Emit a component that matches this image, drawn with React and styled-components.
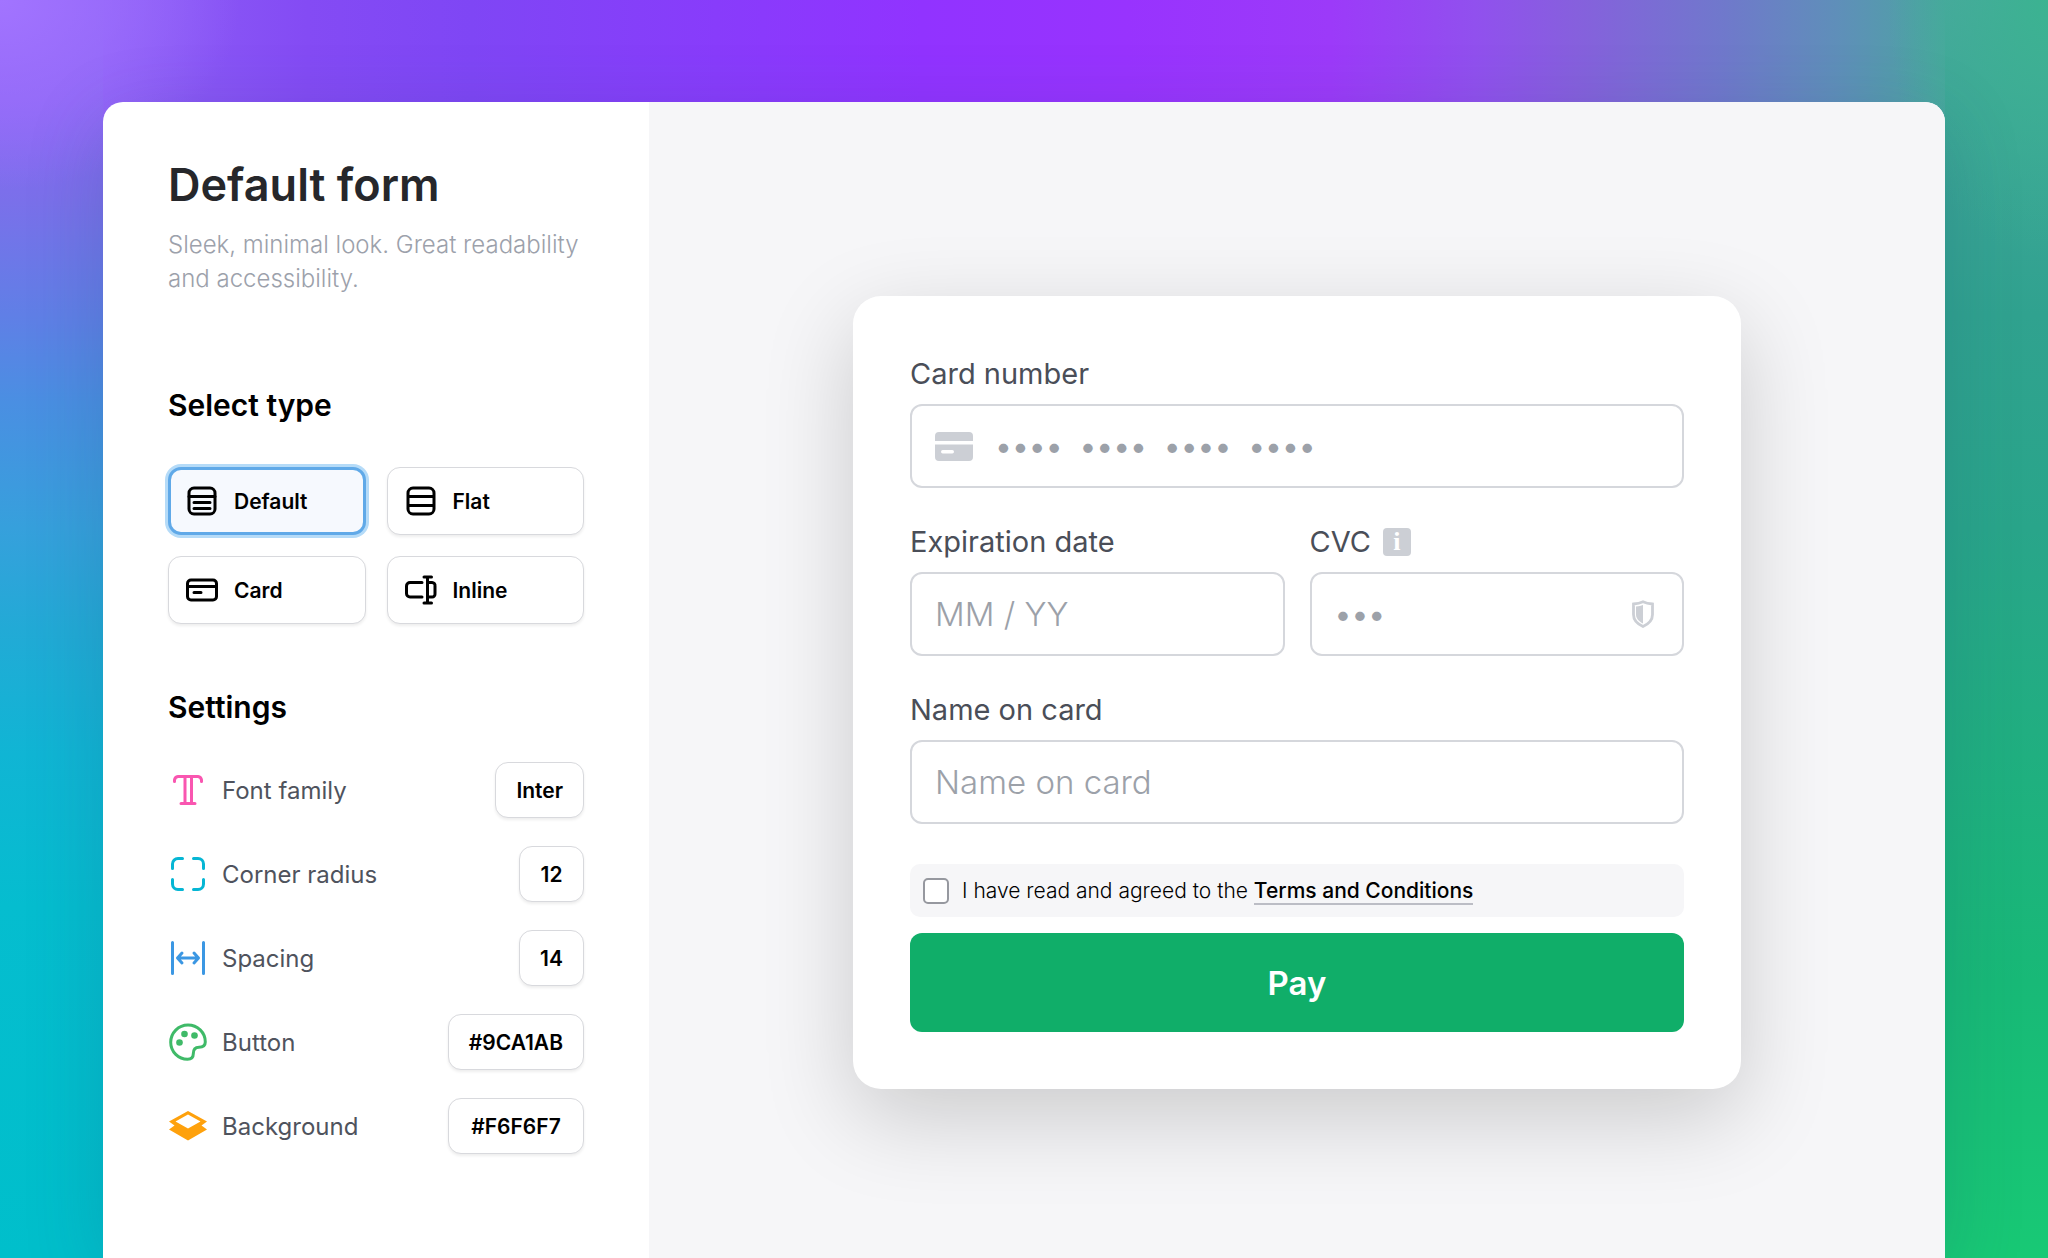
import React, { useState } from 'react';
import styled, { createGlobalStyle } from 'styled-components';

const GlobalStyle = createGlobalStyle`
  *, *::before, *::after {
    box-sizing: border-box;
  }
  body {
    margin: 0;
    font-family: Inter, "Liberation Sans", sans-serif;
    color: #000;
  }
  button, input {
    font: inherit;
    color: inherit;
  }
`;

// Form type icons
const DefaultIcon = () => (
  <svg width="36" height="36" viewBox="0 0 36 36" fill="none" stroke="#000" strokeWidth="3" strokeLinecap="round" aria-hidden="true">
    <rect x="5" y="5" width="26" height="26" rx="5" />
    <path d="M5 13.500h26M10 19.500h16M10 25.500h16" />
  </svg>
);
const FlatIcon = () => (
  <svg width="36" height="36" viewBox="0 0 36 36" fill="none" stroke="#000" strokeWidth="3" aria-hidden="true">
    <rect x="5" y="5" width="26" height="26" rx="5" />
    <path d="M5 13.500h26M5 22.500h26" />
  </svg>
);
const CardIcon = () => (
  <svg width="36" height="36" viewBox="0 0 36 36" fill="none" stroke="#000" strokeWidth="3" strokeLinecap="round" aria-hidden="true">
    <rect x="3.500" y="8" width="29" height="20" rx="3.500" />
    <path d="M3.500 14.500h29M10 20.500h7" />
  </svg>
);
const InlineIcon = () => (
  <svg width="36" height="36" viewBox="0 0 36 36" fill="none" stroke="#000" strokeWidth="3" strokeLinecap="round" strokeLinejoin="round" aria-hidden="true">
    <path d="M19 10.500H7a3.500 3.500 0 0 0-3.500 3.500v7.500A3.500 3.500 0 0 0 7 25h12" />
    <path d="M25 10.500h4a3 3 0 0 1 3 3.500v7.500A3 3 0 0 1 29 25h-4" />
    <path d="M24.500 5v26M21 5h7.500M21 31h7.500" />
  </svg>
);

// Settings icons
const FontIcon = () => (
  <svg width="40" height="40" viewBox="0 0 40 40" fill="none" stroke="#f956b0" strokeWidth="3" strokeLinecap="round" strokeLinejoin="round" aria-hidden="true">
    <path d="M6.500 11.500V10A4 4 0 0 1 10 6.500h20A4 4 0 0 1 33.500 10v1.500" />
    <path d="M17 6.500v27M23.500 6.500v27M13 33.500h14" />
  </svg>
);
const RadiusIcon = () => (
  <svg width="40" height="40" viewBox="0 0 40 40" fill="none" stroke="#06b6d4" strokeWidth="3" strokeLinecap="round" aria-hidden="true">
    <path d="M4.500 14.500V10A5.500 5.500 0 0 1 10 4.500h4.500M25.500 4.500H30a5.500 5.500 0 0 1 5.500 5.500v4.500M35.500 25.500V30a5.500 5.500 0 0 1-5.500 5.500h-4.500M14.500 35.500H10A5.500 5.500 0 0 1 4.500 30v-4.500" />
  </svg>
);
const SpacingIcon = () => (
  <svg width="40" height="40" viewBox="0 0 40 40" fill="none" stroke="#3b97e3" strokeWidth="3" strokeLinecap="round" strokeLinejoin="round" aria-hidden="true">
    <path d="M4.500 4.500v31M35.500 4.500v31M10 20h20M14 15l-4.500 5 4.500 5M26 15l4.500 5-4.500 5" />
  </svg>
);
const PaletteIcon = () => (
  <svg width="40" height="40" viewBox="0 0 40 40" fill="none" aria-hidden="true">
    <path d="M20 3a17.300 17.300 0 0 0-17.300 17.300C2.700 30 10.500 37.300 19.500 37.300c4.500 0 5.800-2.800 5.800-5.500 0-4.500 1.500-6.600 5.700-6.600 4 0 6.300-2 6.300-5.200C37.300 10.500 29.500 3 20 3z" stroke="#3fba68" strokeWidth="3" />
    <circle cx="11.500" cy="20.500" r="3.300" fill="#3fba68" />
    <circle cx="16.500" cy="12" r="3.300" fill="#3fba68" />
    <circle cx="26.500" cy="13.500" r="3.300" fill="#3fba68" />
  </svg>
);
const LayersIcon = () => (
  <svg width="40" height="40" viewBox="0 0 40 40" fill="#fea10c" aria-hidden="true">
    <path fillRule="evenodd" d="M20 5 39 15.500 33.500 19.500 39 23.500 20 34.500 1 23.500 6.500 19.500 1 15.500zM20 8.500 7.500 15.500 20 22.500l12.500-7z" />
  </svg>
);

// Payment form icons
const CreditCardIcon = () => (
  <svg width="38" height="30" viewBox="0 0 38 30" fill="#cccfd5" aria-hidden="true">
    <path d="M4 1h30a4 4 0 0 1 4 4v5H0V5a4 4 0 0 1 4-4zM0 13.500h38V26a4 4 0 0 1-4 4H4a4 4 0 0 1-4-4z" />
    <rect x="6" y="19" width="13" height="3.500" rx="1.700" fill="#fff" />
  </svg>
);
const ShieldIcon = () => (
  <svg width="24" height="28" viewBox="0 0 24 28" aria-hidden="true">
    <path d="M12 1.800C9.500 3 6 3.800 2.500 4v10.500c0 5.500 4 9.500 9.500 12 5.500-2.500 9.500-6.500 9.500-12V4C18 3.800 14.500 3 12 1.800z" fill="none" stroke="#cccfd5" strokeWidth="2.800" />
    <path d="M12 5c-2 .8-4 1.300-7 1.500v8c0 4 3 7 7 9z" fill="#cccfd5" />
  </svg>
);

const types = [
  { id: 'default', name: 'Default', Icon: DefaultIcon },
  { id: 'flat', name: 'Flat', Icon: FlatIcon },
  { id: 'card', name: 'Card', Icon: CardIcon },
  { id: 'inline', name: 'Inline', Icon: InlineIcon },
];

const settings = [
  { id: 'font', name: 'Font family', value: 'Inter', Icon: FontIcon },
  { id: 'radius', name: 'Corner radius', value: '12', Icon: RadiusIcon },
  { id: 'spacing', name: 'Spacing', value: '14', Icon: SpacingIcon },
  { id: 'button', name: 'Button', value: '#9CA1AB', Icon: PaletteIcon, wide: true },
  { id: 'background', name: 'Background', value: '#F6F6F7', Icon: LayersIcon, wide: true },
];

function Sidebar() {
  const [type, setType] = useState('default');
  return (
    <StyledSidebar>
      <Title>Default form</Title>
      <Description>Sleek, minimal look. Great readability and accessibility.</Description>
      <SectionTitle>Select type</SectionTitle>
      <TypeGrid>
        {types.map(({ id, name, Icon }) => (
          <TypeButton
            key={id}
            type="button"
            $active={type === id}
            aria-pressed={type === id}
            onClick={() => setType(id)}
          >
            <Icon />
            {name}
          </TypeButton>
        ))}
      </TypeGrid>
      <SectionTitle>Settings</SectionTitle>
      <SettingList>
        {settings.map(({ id, name, value, Icon, wide }) => (
          <SettingRow key={id}>
            <Icon />
            <SettingName id={`setting-${id}`}>{name}</SettingName>
            <SettingValue type="button" $wide={wide} aria-describedby={`setting-${id}`}>
              {value}
            </SettingValue>
          </SettingRow>
        ))}
      </SettingList>
    </StyledSidebar>
  );
}

function PaymentForm() {
  return (
    <StyledForm onSubmit={(e) => e.preventDefault()}>
      <Field>
        <Label htmlFor="number">Card number</Label>
        <InputBox>
          <CreditCardIcon />
          <Input id="number" $dots placeholder="••••  ••••  ••••  ••••" />
        </InputBox>
      </Field>
      <FieldRow>
        <Field>
          <Label htmlFor="expiry">Expiration date</Label>
          <InputBox>
            <Input id="expiry" placeholder="MM / YY" />
          </InputBox>
        </Field>
        <Field>
          <LabelLine>
            <Label htmlFor="cvc">CVC</Label>
            <InfoButton type="button" aria-label="About CVC">i</InfoButton>
          </LabelLine>
          <InputBox>
            <Input id="cvc" $dots placeholder="•••" />
            <ShieldIcon />
          </InputBox>
        </Field>
      </FieldRow>
      <Field>
        <Label htmlFor="name">Name on card</Label>
        <InputBox>
          <Input id="name" placeholder="Name on card" />
        </InputBox>
      </Field>
      <Terms>
        <Checkbox type="checkbox" id="terms" />
        <label htmlFor="terms">
          I have read and agreed to the <TermsLink href="#terms">Terms and Conditions</TermsLink>
        </label>
      </Terms>
      <PayButton type="submit">Pay</PayButton>
    </StyledForm>
  );
}

function App() {
  return (
    <Page>
      <GlobalStyle />
      <Window>
        <Sidebar />
        <Preview>
          <PaymentForm />
        </Preview>
      </Window>
    </Page>
  );
}

const Page = styled.div`
  min-height: 100vh;
  display: flex;
  padding: 102px 103px 0;
  overflow: hidden;
  background:
    radial-gradient(ellipse 240px 190px at 0 0, #a274ff, rgba(162, 116, 255, 0)) no-repeat,
    radial-gradient(ellipse 160px 260px at 100% 0, #3bb391, rgba(59, 179, 145, 0)) no-repeat,
    linear-gradient(180deg, #8d60f6 0%, #8b66f4 8%, #7a70ea 16%, #607fe6 25%, #4a8fe2 32%, #36a0dc 42%, #22aad6 50%, #10b5d4 60%, #05bdcf 72%, #00bfcb 100%) left / 103px 100% no-repeat,
    linear-gradient(180deg, #4ba5a0 0%, #3ea598 9%, #30a28f 25%, #29a58a 42%, #20af80 60%, #18b977 78%, #18c975 100%) right / 103px 100% no-repeat,
    linear-gradient(90deg, #8d60f6 5%, #844bf4 15%, #7f46f5 23%, #883cfb 35%, #9133ff 45%, #9833fe 55%, #9c3af9 65%, #9150ee 72%, #8660dd 77%, #7078cc 84%, #5e90b8 90%, #4ba5a0 95%);
`;
const Window = styled.main`
  flex: 1;
  display: grid;
  grid-template-columns: 546px 1fr;
  border-radius: 20px 20px 0 0;
  overflow: hidden;
  background: #fff;
  box-shadow: 0 20px 80px rgba(30, 70, 110, .2);
`;
const StyledSidebar = styled.aside`
  padding: 53px 65px 64px;
`;
const Title = styled.h1`
  margin: 0;
  font-size: 45px;
  font-weight: 600;
  line-height: 60px;
  color: #26272b;
`;
const Description = styled.p`
  margin: 13px 0 26px;
  font-size: 24px;
  font-weight: 350;
  line-height: 34px;
  color: #9ca1ab;
`;
const SectionTitle = styled.h2`
  margin: 0;
  padding-top: 63px;
  font-size: 30px;
  font-weight: 600;
  line-height: 40px;
`;
const TypeGrid = styled.div`
  display: grid;
  grid-template-columns: 1fr 1fr;
  gap: 21px;
  margin-top: 42px;
`;
const TypeButton = styled.button`
  height: 68px;
  display: flex;
  align-items: center;
  gap: 14px;
  padding: 0 15px;
  border: 1px solid #d8d9dd;
  border-radius: 13px;
  background: #fff;
  box-shadow: 0 2px 3px rgba(0, 0, 0, .07);
  font-size: 21px;
  font-weight: 600;
  cursor: pointer;
  ${({ $active }) => $active && `
    padding: 0 13px;
    border: 3px solid #60a9e8;
    background: #f6f9fe;
    box-shadow: 0 0 0 3px #b5dbf8;
  `}
`;
const SettingList = styled.ul`
  margin: 35px 0 0;
  padding: 0;
  display: flex;
  flex-direction: column;
  gap: 28px;
  list-style: none;
`;
const SettingRow = styled.li`
  display: flex;
  align-items: center;
`;
const SettingName = styled.span`
  flex: 1;
  margin-left: 14px;
  font-size: 24px;
  color: #4f535d;
`;
const SettingValue = styled.button`
  height: 56px;
  min-width: ${({ $wide }) => ($wide ? '136px' : '65px')};
  padding: 0 20px;
  border: 1px solid #d8d9dd;
  border-radius: 13px;
  background: #fff;
  box-shadow: 0 2px 3px rgba(0, 0, 0, .07);
  font-size: 21px;
  font-weight: 600;
  cursor: pointer;
`;
const Preview = styled.section`
  padding: 194px 64px 64px;
  background: #f6f6f8;
`;
const StyledForm = styled.form`
  max-width: 888px;
  margin: 0 auto;
  padding: 57px;
  display: flex;
  flex-direction: column;
  border-radius: 28px;
  background: #fff;
  box-shadow: 0 28px 90px rgba(0, 0, 0, .18);
`;
const Field = styled.div`
  min-width: 0;
  display: flex;
  flex-direction: column;
  gap: 9px;
  margin-bottom: 33px;
`;
const FieldRow = styled.div`
  display: grid;
  grid-template-columns: 1fr 1fr;
  gap: 25px;
`;
const LabelLine = styled.div`
  display: flex;
  align-items: center;
  gap: 12px;
`;
const Label = styled.label`
  font-size: 29px;
  line-height: 42px;
  color: #4a4e58;
`;
const InfoButton = styled.button`
  width: 28px;
  height: 28px;
  padding: 0;
  border: 0;
  border-radius: 4px;
  background: #cccfd5;
  color: #fff;
  font-family: "Liberation Serif", serif;
  font-size: 26px;
  font-weight: 700;
  line-height: 28px;
`;
const InputBox = styled.div`
  height: 84px;
  display: flex;
  align-items: center;
  gap: 22px;
  padding: 0 27px 0 23px;
  border: 2px solid #d5d7dc;
  border-radius: 12px;
`;
const Input = styled.input`
  flex: 1;
  min-width: 0;
  padding: 0;
  border: 0;
  outline: 0;
  background: none;
  font-size: ${({ $dots }) => ($dots ? '30px' : '33px')};
  font-weight: ${({ $dots }) => ($dots ? 400 : 350)};
  &::placeholder {
    color: #9ca1a9;
    opacity: 1;
  }
`;
const Terms = styled.div`
  display: flex;
  align-items: center;
  gap: 13px;
  height: 53px;
  margin: 7px 0 16px;
  padding: 0 13px;
  border-radius: 10px;
  background: #f6f6f8;
  font-size: 21px;
  font-weight: 350;
`;
const Checkbox = styled.input`
  appearance: none;
  width: 26px;
  height: 26px;
  margin: 0;
  border: 2px solid #96989f;
  border-radius: 5px;
  background: #fff;
  &:checked {
    background: #10ae69;
  }
`;
const TermsLink = styled.a`
  border-bottom: 2px solid #bcbdc5;
  color: inherit;
  font-weight: 450;
  text-decoration: none;
`;
const PayButton = styled.button`
  height: 99px;
  border: 0;
  border-radius: 12px;
  background: #10ae69;
  color: #fff;
  font-size: 33px;
  font-weight: 600;
  cursor: pointer;
`;

export default App;
